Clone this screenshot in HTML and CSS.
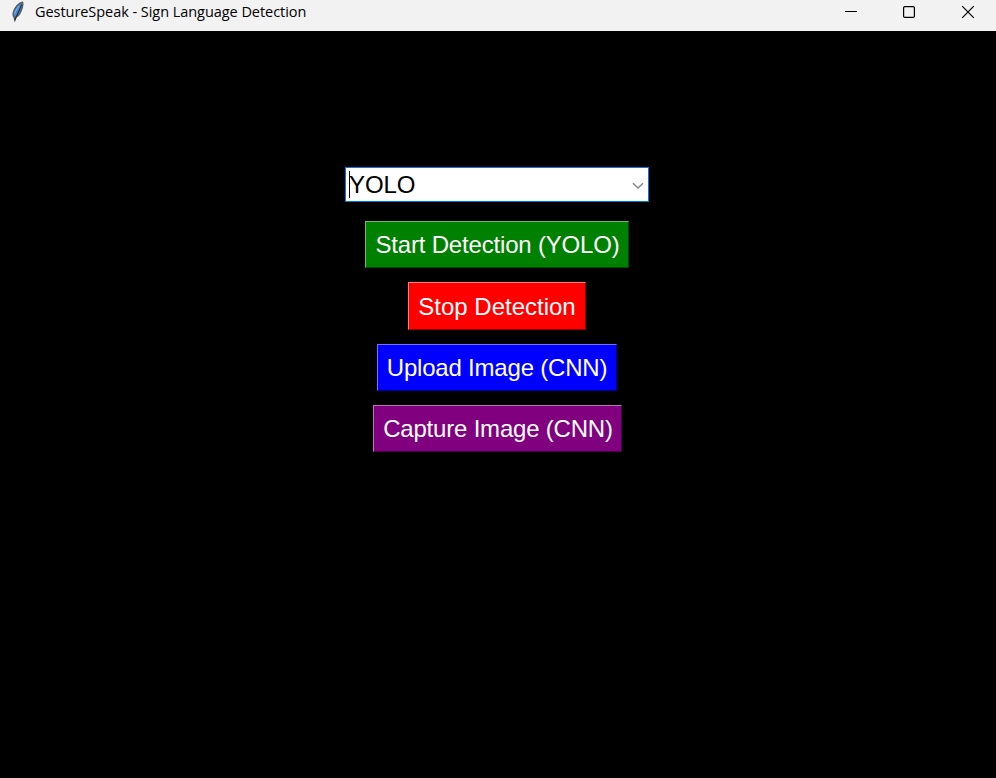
FILE: index.html
```html
<!DOCTYPE html>
<html lang="en">
<head>
<meta charset="utf-8">
<title>GestureSpeak - Sign Language Detection</title>
<link rel="stylesheet" href="styles.css">
</head>
<body>
<header class="titlebar">
  <svg class="feather" width="14" height="21" viewBox="0 0 14 21">
    <path d="M11.5 1.2C7.500 2 3.200 7 2.200 12c-.3 1.700 0 3.200.8 4l.8 3.500 1.200-3.600c2.600-.8 4.800-4.300 5.900-8C11.800 5.500 12.200 3 11.500 1.200z" fill="#4a86cc" stroke="#55585c" stroke-width="1.300"/>
    <path d="M10.500 3.500C9.500 8 6.500 12 4 19" fill="none" stroke="#222d3a" stroke-width="1.100"/>
    <path d="M8 4.800C6 7.500 4.600 9.500 4 12.500" fill="none" stroke="#8dbcf0" stroke-width="1"/>
  </svg>
  <h1 class="title">GestureSpeak - Sign Language Detection</h1>
  <div class="controls">
    <svg width="14" height="14" viewBox="0 0 14 14"><path d="M1 6.500h12" stroke="#000"/></svg>
    <svg width="14" height="14" viewBox="0 0 14 14"><rect x="1.600" y="1.600" width="10.800" height="10.800" rx="1.200" fill="none" stroke="#000" stroke-width="1.200"/></svg>
    <svg class="close" width="14" height="14" viewBox="0 0 14 14"><path d="M1.200 1.200l11.600 11.600M12.800 1.200L1.200 12.800" stroke="#000" stroke-width="1.200"/></svg>
  </div>
</header>
<main class="content">
  <div class="combo">
    <span class="caret"></span><span class="value">YOLO</span>
    <svg class="chevron" width="12" height="8" viewBox="0 0 12 8"><path d="M1 1.300l5 4.700 5-4.700" fill="none" stroke="#858585" stroke-width="1.400"/></svg>
  </div>
  <button class="btn start">Start Detection (YOLO)</button>
  <button class="btn stop">Stop Detection</button>
  <button class="btn upload">Upload Image (CNN)</button>
  <button class="btn capture">Capture Image (CNN)</button>
</main>
</body>
</html>
```
FILE: styles.css
```css
* { box-sizing: border-box; }
body {
  margin: 0;
  height: 778px;
  overflow: hidden;
  background: #000;
  display: flex;
  flex-direction: column;
}
.titlebar {
  height: 31px;
  padding: 0 21px 7px 11px;
  display: flex;
  align-items: center;
  background: #f2f2f2;
}
.feather { flex: none; margin-top: -1px; }
.title {
  margin: 0 0 0 10px;
  font: 400 14.500px/24px "Open Sans", "Noto Sans", sans-serif;
  letter-spacing: -0.050px;
  color: #000;
  white-space: nowrap;
}
.controls {
  margin-left: auto;
  display: flex;
  gap: 44px;
}
.close { margin-left: 1px; }
.content {
  flex: 1;
  padding: 136px 0 0 0;
  display: flex;
  flex-direction: column;
  align-items: center;
  font-family: "Liberation Sans", Arial, sans-serif;
  font-size: 24px;
}
.combo {
  width: 304px;
  height: 35px;
  margin: 0 0 19px -2px;
  padding: 0 4px 0 3px;
  display: flex;
  align-items: center;
  background: #fff;
  border: 1px solid #0078d7;
  color: #000;
}
.caret { width: 1px; height: 27px; background: #000; }
.value { margin-left: -1px; letter-spacing: -0.100px; }
.chevron { margin-left: auto; margin-top: 2px; }
.btn {
  height: 47px;
  margin: 0 0 14.300px -2px;
  padding: 1px 0 0;
  border: 1px solid;
  color: #fff;
  font: inherit;
  white-space: nowrap;
}
.start { width: 264px; padding-left: 1px; letter-spacing: -0.180px; background: #008000; border-color: #73b973 #004800 #004800 #73b973; }
.stop { width: 178px; height: 48px; margin-bottom: 13.300px; padding-top: 2px; background: #f00; border-color: #ff8080 #900000 #900000 #ff8080; }
.upload { width: 240px; letter-spacing: -0.200px; background: #00f; border-color: #7373ff #000090 #000090 #7373ff; }
.capture { width: 249px; margin-left: -1px; padding-left: 1px; letter-spacing: -0.200px; background: #800080; border-color: #b973b9 #480048 #480048 #b973b9; }
```
